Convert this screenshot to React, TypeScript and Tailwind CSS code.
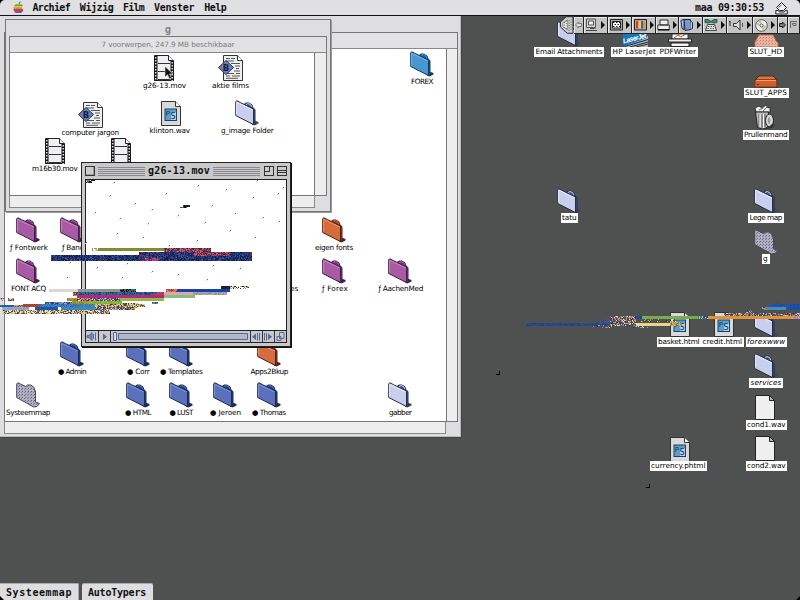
import React, { useLayoutEffect, useRef, useState } from "react";

/* Text whose tracking is adjusted until it spans the given width. */
function Fit({ text, w, className = "" }: { text: string; w: number; className?: string }) {
  const ref = useRef<HTMLSpanElement>(null);
  const [ls, setLs] = useState(0);
  useLayoutEffect(() => {
    if (ref.current) {
      const natural = ref.current.getBoundingClientRect().width;
      setLs((w - natural) / text.length);
    }
  }, [text, w]);
  return (
    <span ref={ref} className={"inline-block whitespace-pre " + className} style={{ letterSpacing: ls }}>
      {text}
    </span>
  );
}

const chicago = "font-['DejaVu_Sans_Mono',monospace] font-bold text-[10px] leading-[12px] text-[#111]";

type Tone = { face: string; hi: string; side: string; edge: string };
const tones: Record<string, Tone> = {
  purple: { face: "#a85aa4", hi: "#c488c0", side: "#6d3a86", edge: "#3d2142" },
  blue: { face: "#5a70bb", hi: "#7f94d2", side: "#1f4589", edge: "#1a2a50" },
  sky: { face: "#4596d2", hi: "#74b4e4", side: "#1d5c9f", edge: "#173a63" },
  orange: { face: "#d66c3c", hi: "#e89468", side: "#9c3c26", edge: "#4f2014" },
  pale: { face: "#c8cfec", hi: "#e8ecfa", side: "#425795", edge: "#252c46" },
};

function Folder({ tone }: { tone: string }) {
  const t = tones[tone];
  return (
    <svg width="25" height="27" viewBox="0 0 25 27">
      <path d="M18 20l5.500 2v1.500l-4 2-5-3z" fill={tone === "pale" ? "#444850" : t.edge} />
      <path d="M9 4.500l2-1.500h3l3 2 1 3 2 1.500v14.500l-2 .8z" fill={t.side} stroke={t.edge} strokeWidth="1" />
      <path d="M11 4.500l2-1 2.500 1 1.500 2.500" fill="none" stroke={t.face} strokeWidth="1" />
      <path d="M.7 2l1-1.300 4 2L18.500 9v15.600L.7 15.500z" fill={t.face} stroke={t.edge} strokeWidth="1" />
      <path d="M1.600 14.500V2.400L17.600 10" fill="none" stroke={t.hi} strokeWidth="1" />
    </svg>
  );
}

function OpenFolder() {
  return (
    <svg width="25" height="27" viewBox="0 0 25 27">
      <defs>
        <pattern id="dots" width="3" height="3" patternUnits="userSpaceOnUse">
          <rect width="3" height="3" fill="#b0b0c4" />
          <rect width="1" height="1" fill="#606078" />
          <rect x="2" y="1" width="1" height="1" fill="#7a7a90" />
        </pattern>
      </defs>
      <path d="M.7 2l1-1.300 8 3.800 2-1.500h3l3 2 1 3 .8 1V20l4 1.500-2.500 3-3.500.5L.7 15.500z" fill="url(#dots)" stroke="#484858" strokeWidth="1" />
    </svg>
  );
}

function Film() {
  return (
    <svg width="21" height="26" viewBox="0 0 21 26">
      <path d="M.5.5h14l5 5v20H.5z" fill="#f0f0f2" stroke="#222" />
      <path d="M14.500.5v5h5" fill="#fff" stroke="#222" />
      <path d="M2 1v25M18 6v20" stroke="#111" strokeWidth="3" />
      <path d="M1.800 2v24M18.200 7v19" stroke="#f4f4f4" strokeWidth="1.400" strokeDasharray="1.500 1.500" />
      <path d="M4 8.500h12M4 16.500h12M4 24.500h12" stroke="#333" />
    </svg>
  );
}

function BBDoc() {
  return (
    <svg width="26" height="26" viewBox="0 0 26 26">
      <path d="M5.500.5h14l5 5v20h-19z" fill="#efefef" stroke="#333" />
      <path d="M19.500.5v5h5" fill="#fff" stroke="#333" />
      <path d="M8 3.500h4M13 3.500h4M8 6h8M13 8.500h9M17 11h5M18 13.500h3M16 16h6M9 18.500h7M18 18.500h4M8 21h4M14 21h8M8 23.300h12" stroke="#555" />
      <path d="M8 5.500L15.500 12.500 8 19.500.5 12.500z" fill="#6880b4" stroke="#26345c" />
      <text x="4.800" y="15.700" fontFamily="DejaVu Sans, sans-serif" fontWeight="bold" fontSize="8.500" fill="#16203c">B</text>
    </svg>
  );
}

function PsDoc() {
  return (
    <svg width="20" height="25" viewBox="0 0 20 25">
      <path d="M.5.5h14l5 5v19H.5z" fill="#d9d9d9" stroke="#333" />
      <path d="M14.500.5v5h5" fill="#fff" stroke="#333" />
      <rect x="4" y="8" width="11.500" height="11.500" fill="#55a0cc" stroke="#23415c" />
      <path d="M10 13l5-2v8h-5z" fill="#a8d0f4" />
      <text x="4.800" y="14.800" fontFamily="DejaVu Sans, sans-serif" fontSize="7" fill="#193250">P</text>
      <text x="9.500" y="18" fontFamily="DejaVu Sans, sans-serif" fontSize="8" fill="#193250">S</text>
    </svg>
  );
}

function BlankDoc() {
  return (
    <svg width="20" height="25" viewBox="0 0 20 25">
      <path d="M.5.5h14l5 5v19H.5z" fill="#efefef" stroke="#222" />
      <path d="M14.500.5v5h5z" fill="#bbb" stroke="#222" />
    </svg>
  );
}

function Drive() {
  return (
    <svg width="25" height="14" viewBox="0 0 25 14">
      <path d="M3 11h20l1 2H5z" fill="#333" />
      <path d="M1 5l4-4h14l4 4z" fill="#dd7741" stroke="#5a2412" />
      <path d="M.8 5h22v7h-22z" fill="#d25f2b" stroke="#7c3418" />
      <path d="M2 5.500h20" stroke="#f0a070" />
      <path d="M3 9.500h2" stroke="#6a2a14" />
    </svg>
  );
}

function OpenDrive() {
  return (
    <svg width="26" height="14" viewBox="0 0 26 14">
      <defs>
        <pattern id="odots" width="3" height="3" patternUnits="userSpaceOnUse">
          <rect width="3" height="3" fill="#ebb4a2" />
          <rect width="1" height="1" fill="#c8795f" />
          <rect x="2" y="1" width="1" height="1" fill="#db9079" />
        </pattern>
      </defs>
      <path d="M1 13V8l4-7h14l3 6 2 2v4z" fill="url(#odots)" stroke="#c4694c" strokeWidth=".8" />
    </svg>
  );
}

function Trash() {
  return (
    <svg width="22" height="25" viewBox="0 0 22 25">
      <path d="M2 7L1 3l4-2 3 2 4-3 2 3 2-1v5z" fill="#eee" stroke="#222" strokeWidth=".8" />
      <path d="M5 5l4-2M9 6l4-4" stroke="#666" />
      <path d="M1.500 7h13l-1 15.500-5 1.500-5-1.500z" fill="#bdbdbd" stroke="#222" />
      <path d="M5 9v13M8 9v14M11 9v13" stroke="#555" />
      <path d="M6 9v13M9.500 9v14" stroke="#fff" />
      <ellipse cx="15.500" cy="15.500" rx="4" ry="6.500" fill="#ccc" stroke="#222" />
      <ellipse cx="15" cy="15.500" rx="2" ry="4" fill="#999" stroke="#eee" />
      <path d="M18 19l3 1-3 3-6 1z" fill="#333" />
    </svg>
  );
}

function Laser() {
  return (
    <svg width="28" height="14" viewBox="0 0 28 14" className="overflow-visible">
      <path d="M1 9L26 2v11H4z" fill="#aeb9c4" />
      <path d="M1 0h24v4L3 12 .5 10z" fill="#1974b4" />
      <path d="M3 12.500l23-7M8 13l18-5M14 13l12-3" stroke="#1c2228" />
      <text x="1.500" y="9.500" transform="rotate(-14 1.500 9.500)" fontFamily="Liberation Sans, sans-serif" fontWeight="bold" fontStyle="italic" fontSize="7" textLength="24" fill="#fff">LaserJet</text>
    </svg>
  );
}

function PdfPrinter() {
  return (
    <svg width="24" height="13" viewBox="0 0 24 13">
      <path d="M4 0h16v5H4z" fill="#fff" stroke="#333" />
      <path d="M6 4l4-3 3 2 5-3" fill="none" stroke="#d0402c" />
      <path d="M.5 5h23v3H.5z" fill="#eee" stroke="#222" />
      <path d="M3 9h18v3.500H3z" fill="#f4f4f4" stroke="#222" />
    </svg>
  );
}

function glyph(kind: string) {
  switch (kind) {
    case "open": return <OpenFolder />;
    case "film": return <Film />;
    case "bb": return <BBDoc />;
    case "ps": return <PsDoc />;
    case "blank": return <BlankDoc />;
    case "drive": return <Drive />;
    case "opendrive": return <OpenDrive />;
    case "trash": return <Trash />;
    case "laser": return <Laser />;
    case "pdf": return <PdfPrinter />;
    default: return <Folder tone={kind} />;
  }
}

/* kind, icon x, icon y, label, label left, label right, label middle */
type Item = [string, number, number, string, number, number, number];

const backItems: Item[] = [
  ["sky", 410, 51, "FOREX", 411, 433, 82],
  ["purple", 16, 217, "ƒ Fontwerk", 10, 48, 247.5],
  ["purple", 60, 217, "ƒ Bang", 62, 84, 247.5],
  ["purple", 16, 258, "FONT ACQ", 11, 46, 289],
  ["orange", 322, 217, "eigen fonts", 315, 353, 247.5],
  ["purple", 322, 258, "ƒ Forex", 322, 348, 289],
  ["purple", 262, 258, "es", 290, 298.5, 289],
  ["purple", 388, 258, "ƒ AachenMed", 378.5, 423, 289],
  ["blue", 60, 341, "● Admin", 58, 86, 372],
  ["blue", 126, 341, "● Corr", 127, 149.5, 372],
  ["blue", 169, 341, "● Templates", 160, 202.5, 372],
  ["orange", 257, 341, "Apps2Bkup", 250.5, 288, 372],
  ["open", 16, 382, "Systeemmap", 6, 50, 413],
  ["blue", 126, 382, "● HTML", 125, 151, 413],
  ["blue", 169, 382, "● LUST", 169.5, 193, 413],
  ["blue", 213, 382, "● Jeroen", 210, 241, 413],
  ["blue", 257, 382, "● Thomas", 252, 285.5, 413],
  ["pale", 388, 382, "gabber", 389, 411.5, 413],
];

const frontItems: Item[] = [
  ["film", 154, 55, "g26-13.mov", 143, 186, 86],
  ["bb", 218, 55, "aktie films", 212, 249, 86],
  ["bb", 78, 102, "computer jargon", 61.5, 119, 132.5],
  ["ps", 161, 101, "klinton.wav", 149.5, 190, 131],
  ["pale", 235, 100, "g_image Folder", 221, 273.5, 130.5],
  ["film", 45, 138, "m16b30.mov", 32, 77.5, 168.5],
  ["film", 111, 138, "", 0, 0, 0],
];

const deskItems: Item[] = [
  ["pale", 557, 21, "Email Attachments", 535.5, 602.5, 52],
  ["laser", 622, 34, "HP LaserJet", 612.5, 656, 52],
  ["pdf", 668, 34, "PDFWriter", 659.5, 696, 52],
  ["opendrive", 754, 34, "SLUT_HD", 749.5, 782, 52],
  ["drive", 754, 75, "SLUT_APPS", 745, 787, 93],
  ["trash", 754, 105, "Prullenmand", 744, 787.5, 134.5],
  ["pale", 557, 188, "tatu", 562, 576.5, 217.5],
  ["pale", 754, 188, "Lege map", 749.5, 782, 217.5],
  ["open", 754, 229, "g", 763, 768, 259],
  ["ps", 669.5, 312, "basket.html", 658, 699.5, 341.7],
  ["ps", 713.5, 312, "credit.html", 702.5, 742, 341.7],
  ["pale", 754, 312, "forexwww", 747, 785.5, 341.7],
  ["pale", 754, 353, "services", 750.5, 781.5, 383.3],
  ["blank", 754.5, 394.5, "cond1.wav", 747, 785.5, 424.7],
  ["blank", 754.5, 436, "cond2.wav", 747, 785.5, 466],
  ["ps", 669.5, 436.5, "currency.phtml", 651, 705.5, 466],
];

function Icons({ items, boxed = false }: { items: Item[]; boxed?: boolean }) {
  return (
    <>
      {items.map(([kind, x, y, label, l, r, cy], i) => (
        <React.Fragment key={i}>
          <div className="absolute" style={{ left: x, top: y }}>{glyph(kind)}</div>
          {label && (
            <div
              className={"absolute flex h-[10px] items-center justify-start " + (boxed ? "bg-white px-[1.5px]" : "")}
              style={{ left: boxed ? l - 1.5 : l, top: cy - 5, width: boxed ? r - l + 3 : r - l }}
            >
              <Fit
                text={label}
                w={r - l}
                className={
                  "font-['DejaVu_Sans',sans-serif] text-[7.3px] leading-[10px] text-black " +
                  (label === "forexwww" || label === "services" ? "italic" : "")
                }
              />
            </div>
          )}
        </React.Fragment>
      ))}
    </>
  );
}

/* Coloured pixel debris: x1, x2, y1, y2, palette, density */
type Strip = [number, number, number, number, string[], number?];
const multi = ["#d8a040", "#2b5ca8", "#7a3a30", "#e8e0c0", "#50603c", "#c06890", "#303030", "#88a8d0"];
const navy = ["#152c6c", "#1c3f94", "#151a38", "#26347c", "#4a2a5c", "#0f2148", "#2c60a8"];
const navyRed = ["#152c6c", "#1c3f94", "#151a38", "#8e2848", "#26347c", "#2c60a8", "#1a2c70"];
const redBlue = ["#c84444", "#703468", "#2c4488", "#e06050", "#3d2444"];
const yellowMix = ["#e8d040", "#2b5ca8", "#e0d8a8", "#b04834", "#304068", "#c8b030", "#a0a8b8"];
const teal = ["#1a5878", "#207898", "#1c3c58", "#3c6c80"];

const strips: Strip[] = [
  [92, 98, 248, 251, ["#8b9a3c", "#fff", "#bcd0e8"]],
  [98, 164, 248, 251, ["#838c2c"]],
  [164, 211, 248, 252, redBlue],
  [139, 252, 252, 256, navyRed],
  [51, 139, 255, 261, navy],
  [139, 160, 255, 261, navyRed],
  [160, 252, 255, 261, navy],
  [145, 158, 258, 261, ["#a83870", "#503070", "#d04468"]],
  [194, 230, 252, 256, redBlue],
  [49, 78, 289, 292, ["#d7d7d9"]],
  [78, 120, 289, 292, ["#929494"]],
  [120, 136, 289, 292, ["#181818", "#287080", "#405858"]],
  [166, 177, 289, 292, ["#d85c3c", "#e09060", "#903c58"]],
  [177, 230, 289, 292, ["#1744a0"]],
  [221, 230, 286, 289, ["#181c30", "#202850"]],
  [230, 249, 286, 289, ["#222", "#c8b850", "#fff", "#808890"], 0.8],
  [73, 77, 292, 296, ["#d88444", "#804038"]],
  [77, 155, 292, 295, teal],
  [155, 164, 292, 295, ["#c84848", "#704078"]],
  [164, 193, 292, 295, ["#dda5ba"]],
  [193, 227, 292, 295, ["#cc9c78", "#b8a0a0", "#7098d0"]],
  [77, 164, 295, 298, ["#bc228a"]],
  [164, 195, 295, 298, ["#84c178"]],
  [67, 77, 298, 301, ["#a89830", "#8c8024"]],
  [77, 120, 298, 301, multi],
  [120, 164, 298, 301, ["#91bd3e"]],
  [45, 72, 302, 305, ["#2b5ca8", "#6b8cc0", "#384060", "#9caccc"]],
  [72, 88, 301, 304, ["#a69c3c", "#7c8c38"]],
  [88, 122, 301, 304, ["#7cac38", "#91bd3e"]],
  [122, 138, 303, 308, yellowMix],
  [152, 158, 302, 304, ["#2c3c90", "#6880a8"]],
  [0, 14, 305, 307, ["#2368b4", "#1d559c"]],
  [14, 23, 305, 307, ["#c0a850", "#405078"]],
  [23, 40, 304, 307, ["#a04c30"]],
  [40, 75, 304, 307, ["#2868b4", "#5080bc"]],
  [75, 95, 304, 307, ["#4888c0", "#288090"]],
  [95, 145, 304, 307, yellowMix],
  [2, 29, 307, 310, ["#8d9dca", "#a1a6c2"]],
  [35, 58, 307, 310, ["#1756b2"]],
  [61, 95, 307, 310, ["#4685c1", "#4f7da8"]],
  [95, 135, 307, 310, multi],
  [2, 110, 310, 314, yellowMix, 0.88],
  [0, 4, 298, 301, multi, 0.8],
  [8, 14, 298, 301, multi],
  [526, 610, 323, 326, ["#20408e", "#254996", "#354a70"], 0.95],
  [610, 636, 316, 326, multi, 0.8],
  [592, 612, 325, 329, multi, 0.45],
  [600, 612, 319, 324, ["#284890", "#485880"], 0.6],
  [632, 652, 325, 328, multi, 0.5],
  [635, 642, 316, 319, ["#254f9e", "#173b82"]],
  [642, 698, 316, 319, ["#77ae4b"]],
  [640, 676, 319, 322, multi, 0.35],
  [698, 708, 316, 319, ["#287888", "#c8ccb8", "#344c60"]],
  [708, 792, 316, 319, ["#e39235"]],
  [792, 800, 316, 319, ["#c8a0a8", "#a8889c"]],
  [636, 670, 323, 326, ["#efd37f"]],
  [670, 682, 322, 326, ["#d6ae42", "#48738a", "#b19550"]],
  [724, 800, 313, 316, multi, 0.82],
  [746, 752, 310, 313, multi, 0.7],
  [770, 800, 304, 307, ["#2359aa", "#1e4998"]],
  [776, 780, 301, 304, ["#ad9338", "#504c34"], 0.7],
  [762, 765, 307, 310, ["#e08a30", "#444"]],
  [765, 786, 307, 310, ["#4b88c3"]],
  [788, 800, 307, 310, ["#1850a5"]],
  [86, 92, 180, 183, ["#111", "#243c28", "#777"], 0.85],
  [92, 95, 180, 181, ["#111"]],
  [183, 190, 205, 207, ["#111", "#294a34"]],
  [180, 187, 207, 208, ["#111", "#496454"]],
];

const specks = [
  342, 65, 595, 75, 770, 60, 850, 80, 330, 105, 405, 130, 498, 100, 678, 87, 760, 110, 835, 100, 285, 155, 455, 148,
  635, 135, 705, 158, 790, 172, 360, 175, 445, 190, 535, 165, 615, 185, 690, 210, 350, 220, 430, 232, 508, 255, 590,
  240, 765, 230, 210, 305, 292, 322, 380, 310, 455, 332, 640, 315, 720, 325, 200, 350, 365, 350, 535, 343, 620, 358,
  257, 247, 838, 182,
];

function Debris() {
  let seed = 77;
  const rnd = () => {
    seed = (seed * 1664525 + 1013904223) % 4294967296;
    return seed / 4294967296;
  };
  const out: React.ReactNode[] = [];
  strips.forEach(([x1, x2, y1, y2, pal, density = 1], s) => {
    if (pal.length === 1 && density === 1) {
      out.push(<rect key={"s" + s} x={x1} y={y1} width={x2 - x1} height={y2 - y1} fill={pal[0]} />);
      return;
    }
    for (let y = y1; y < y2; y++)
      for (let x = x1; x < x2; x++)
        if (rnd() < density)
          out.push(<rect key={s + "-" + x + "-" + y} x={x} y={y} width="1" height="1" fill={pal[Math.floor(rnd() * pal.length)]} />);
  });
  for (let i = 0; i < specks.length; i += 2) {
    const x = Math.round(specks[i] / 3);
    const y = 160 + Math.round(specks[i + 1] / 3);
    out.push(<rect key={"k" + i} x={x} y={y} width="1" height="1" fill="#666" />);
    out.push(<rect key={"j" + i} x={x - 1} y={y + 1} width="1" height="1" fill="#ccc" />);
  }
  return (
    <svg className="pointer-events-none absolute top-0 left-0" width="800" height="600" shapeRendering="crispEdges">
      {out}
    </svg>
  );
}

function BackWindow() {
  return (
    <div className="absolute top-4 left-0 h-[421px] w-[461px] border-r border-b border-[#bbb] bg-[#dedee0] shadow-[1px_1px_0_#444]">
      <div className="relative mt-4 ml-1 h-[390px] w-[454px] border border-[#777] bg-[#e2e2e4]">
        <div className="mt-[15px] flex h-[373px] border-t border-[#888]">
          <div className="w-[441px] bg-white" />
          <div className="w-[11px] border-l border-[#777] bg-[#eeeeef]" />
        </div>
      </div>
      <div className="ml-1 h-[12px] w-[442px] border-r border-b border-l border-[#888] bg-[#eeeeef]" />
    </div>
  );
}

function FrontWindow() {
  return (
    <div className="absolute top-[19px] left-[5px] h-[193px] w-[326px] border border-[#777] bg-[#dedee0] shadow-[1px_1px_0_#999]">
      <div className="flex h-[16px] items-center justify-center pt-px font-['DejaVu_Sans_Mono',monospace] text-[10.5px] leading-[12px] font-bold text-[#858585]">
        g
      </div>
      <div className="ml-[3px] h-[160px] w-[318px] border border-[#777]">
        <div className="flex h-[16px] items-center justify-center border-b border-[#888] bg-[#e2e2e4] text-[#7c7c7c]">
          <Fit text="7 voorwerpen, 247.9 MB beschikbaar" w={133} className="font-['DejaVu_Sans',sans-serif] text-[7.3px] leading-[10px]" />
        </div>
        <div className="flex h-[142px]">
          <div className="w-[304px] bg-white" />
          <div className="w-[12px] border-l border-[#777] bg-[#eeeeef]" />
        </div>
      </div>
      <div className="ml-[3px] h-[12px] w-[306px] border-r border-b border-l border-[#888] bg-[#eeeeef]" />
    </div>
  );
}

const Lines = () => (
  <div className="flex h-[9px] flex-1 flex-col justify-between">
    {[0, 1, 2, 3, 4].map((i) => (
      <div key={i} className="h-px bg-[#8b8b8b]" />
    ))}
  </div>
);

function MovieWindow() {
  return (
    <div className="absolute top-[162px] left-[81px] flex h-[185px] w-[210px] flex-col border border-[#222] bg-[#c9c9cb] px-[3px] pb-[3px] shadow-[1px_1px_0_#111]">
      <div className="flex h-[16px] items-center">
        <div className="h-[10px] w-[10px] border border-[#333] bg-[#ccc] shadow-[inset_-1px_-1px_0_#999]" />
        <div className="ml-[3px] flex flex-1 items-center gap-[3px]">
          <Lines />
          <Fit text="g26-13.mov" w={62} className={chicago} />
          <Lines />
        </div>
        <div className="ml-[4px] h-[10px] w-[10px] border border-[#333] bg-[#ccc]">
          <div className="h-[5px] w-[5px] border-r border-b border-[#333]" />
        </div>
        <div className="ml-[3px] flex h-[10px] w-[10px] flex-col justify-center gap-px border border-[#333] bg-[#ccc]">
          <div className="h-px bg-[#333]" />
          <div className="h-px bg-[#333]" />
        </div>
      </div>
      <div className="flex flex-1 flex-col border border-[#222] bg-white">
        <div className="flex-1" />
        <div className="flex h-[12px] border-t border-[#222] bg-[#c9c9cb]">
          <svg width="200" height="12" viewBox="0 0 200 12" fill="none" stroke="#5068a0">
            <path d="M1 4.500h2l3-3v8l-3-3H1z" fill="#7186b5" />
            <path d="M7.500 3v5M9.500 1.500v8" />
            <path d="M17 2.500l4 3.300-4 3.300z" fill="#5068a0" stroke="none" />
            <path d="M12.500 0v12M24.500 0v12M164.500 0v12M176.500 0v12M188.500 0v12" stroke="#333" />
            <path d="M32.500 2.500h129v6h-129z" fill="#b4b8c2" />
            <path d="M27.500 1.500h3v8h-3z" fill="#d9dce8" />
            <path d="M170 2.500l-4 3.300 4 3.300zM182 2.500l4 3.300-4 3.300z" fill="#5068a0" stroke="none" />
            <path d="M171.500 2v7.500M173.500 2v7.500M178.500 2v7.500M180.500 2v7.500" />
            <path d="M193.500 1.500h4.500v6h-4.500zM191 5.500h4v4h-4z" />
          </svg>
        </div>
      </div>
    </div>
  );
}

function Cell({ w, children }: { w: number; children: React.ReactNode }) {
  return (
    <div className="flex h-[18px] shrink-0 items-center justify-center border-y border-r border-[#222] bg-[#c4c4c5] shadow-[inset_1px_1px_0_#e8e8e8]" style={{ width: w }}>
      {children}
    </div>
  );
}

const Play = () => (
  <svg width="4" height="8" viewBox="0 0 4 8" className="ml-[3px] shrink-0">
    <path d="M0 0l4 4-4 4z" fill="#111" />
  </svg>
);

function ControlStrip() {
  return (
    <div className="absolute top-4 left-[557px] flex h-[18px] w-[243px] overflow-hidden">
      <svg width="17" height="18" viewBox="0 0 17 18">
        <path d="M16.500.5H9.500L3.500 6v5l7 6.500h6z" fill="#cfcfd0" stroke="#222" />
        <path d="M11 3.500L6 7v3.500l5 3.500z" fill="#f0f0f0" stroke="#777" strokeWidth=".8" />
        <path d="M7.500 6v6M9.500 4.500v9M12.500 4v11M14.500 3v12" stroke="#555" strokeDasharray="1 1.500" />
      </svg>
      <Cell w={10}>
        <svg width="7" height="8" viewBox="0 0 7 8"><path d="M.5 4L3.500 1v1.500h3v3h-3V7z" fill="#ddd" stroke="#777" /></svg>
      </Cell>
      <Cell w={24.5}>
        <svg width="13" height="14" viewBox="0 0 13 14"><path d="M1.500 1h9v8.500h-9z" fill="#d4d4d6" stroke="#555" /><path d="M3.500 3h5v4h-5z" fill="#eef" stroke="#555" /><path d="M5 10.500h4M1 12.500h11" stroke="#444" /><path d="M9 10.500h2" stroke="#7080c0" /></svg>
        <Play />
      </Cell>
      <Cell w={24}>
        <svg width="13" height="12" viewBox="0 0 13 12"><path d="M.5.5h12v10.500H.5z" fill="#aaa" stroke="#222" /><path d="M2.500 2.500h8v6.500h-8z" fill="#fff" stroke="#222" /><path d="M3 3.500h7M3 7.500h7" stroke="#222" strokeDasharray="1.500 1.500" /><path d="M4.500 5.500h6" stroke="#222" strokeDasharray="1.500 1.500" /></svg>
        <Play />
      </Cell>
      <Cell w={24}>
        <svg width="13" height="12" viewBox="0 0 13 12"><path d="M.5.5h12v10.500H.5z" fill="#aaa" stroke="#222" /><path d="M2 2h2.500v7.500H2z" fill="#d84030" /><path d="M4.500 2H7v7.500H4.500z" fill="#ecd040" /><path d="M7 2h2v7.500H7z" fill="#3464b0" /><path d="M9 2h2v7.500H9z" fill="#e09040" /></svg>
        <Play />
      </Cell>
      <Cell w={22.5}>
        <svg width="13" height="12" viewBox="0 0 13 12"><path d="M3 1h8v5H3zM.8 6h11.500v4.500H.8z" fill="#eee" stroke="#333" /><path d="M1 10.800h11.500" stroke="#111" strokeWidth="1.500" /></svg>
        <Play />
      </Cell>
      <Cell w={24.5}>
        <svg width="14" height="14" viewBox="0 0 14 14"><path d="M4 1.500h6.500v10L5 12.500z" fill="#7d96c8" stroke="#1c2c50" /><path d="M1 2.500l3-1v10l-2-1zM10.500 3l2 1.500v6l-2 1" fill="#c0ccdf" stroke="#1c2c50" /></svg>
        <Play />
      </Cell>
      <Cell w={23.5}>
        <svg width="14" height="14" viewBox="0 0 14 14"><path d="M1 1.500h3l3 2 3-2h3v3l-3 .5-3-1-3 1-3-.5z" fill="#3d8e68" stroke="#244" strokeWidth=".8" /><path d="M1.500 12.500l2-6h7l2 6z" fill="#e4e4e4" stroke="#444" /><path d="M4 8.500h6M3.500 10.500h7" stroke="#555" strokeDasharray="1.500 1" /></svg>
        <Play />
      </Cell>
      <Cell w={26.5}>
        <svg width="16" height="12" viewBox="0 0 16 12"><path d="M1 3l1-1v5" fill="none" stroke="#222" /><path d="M5.500 4.500h3L12 1v10L8.500 7.500h-3z" fill="#ddd" stroke="#333" /><path d="M14.500 4v4" stroke="#555" /></svg>
        <Play />
      </Cell>
      <Cell w={24.5}>
        <svg width="13" height="13" viewBox="0 0 13 13"><circle cx="6.500" cy="6.500" r="5.800" fill="#eee" stroke="#555" /><path d="M6.500 6.500L3 2l3-1zM6.500 6.500l4 4-3 1z" fill="#c0c868" /><path d="M6.500 6.500L1.500 6l1-3zM6.500 6.500l5 0-1 3z" fill="#b8c0e0" /><circle cx="6.500" cy="6.500" r="1.500" fill="#fff" stroke="#555" /></svg>
        <Play />
      </Cell>
      <Cell w={10.5}>
        <svg width="7" height="8" viewBox="0 0 7 8"><path d="M6.500 4L3.500 1v1.500h-3v3h3V7z" fill="#777" stroke="#222" /></svg>
      </Cell>
      <Cell w={12}>
        <svg width="7" height="8" viewBox="0 0 7 8"><path d="M.5 7V.5H7M2.500 2.500H6v2H3z" fill="none" stroke="#666" /></svg>
      </Cell>
    </div>
  );
}

const menus: [string, number][] = [["Archief", 37.5], ["Wijzig", 33.5], ["Film", 21], ["Venster", 40.5], ["Help", 22]];

function MenuBar() {
  return (
    <div className="absolute inset-x-0 top-0 h-4 border-b border-[#111] bg-black">
      <div className="flex h-[15px] items-center rounded-t-[5px] bg-[#e0e0e2] pr-[12px] pl-[13px]">
        <svg width="11" height="13" viewBox="0 0 11 13">
          <defs>
            <clipPath id="apple">
              <path d="M5.500 3.500C3 2.500.5 4 .5 7.500S3 12.500 4 12c1-.5 2-.5 3 0s2.500-1 3.500-3C8.500 8 8.500 5.500 10 4.500 9 3 7 3 5.500 3.500z" />
            </clipPath>
          </defs>
          <path d="M5.500 3c0-1.500 1-2.500 2.200-2.800C7.800 1.800 7 3 5.500 3z" fill="#46a040" />
          <g clipPath="url(#apple)">
            <path d="M0 2h11v3H0z" fill="#68ac3c" />
            <path d="M0 5h11v2H0z" fill="#ecc438" />
            <path d="M0 6.500h11v2H0z" fill="#e8823c" />
            <path d="M0 8h11v2H0z" fill="#d0404c" />
            <path d="M0 9.500h11v2H0z" fill="#894a9a" />
            <path d="M0 11h11v2H0z" fill="#3e60ac" />
          </g>
        </svg>
        <div className="ml-[8.5px] flex gap-[9.8px]">
          {menus.map(([m, w]) => (
            <Fit key={m} text={m} w={w} className={chicago} />
          ))}
        </div>
        <div className="ml-auto flex items-center gap-[11px]">
          <Fit text="maa 09:30:53" w={69} className={chicago} />
          <svg width="13" height="14" viewBox="0 0 13 14">
            <path d="M6.500 1.500l5 5-3 3h-4l-3-3z" fill="#eee" stroke="#222" />
            <path d="M.8 9.500h2.500l1 1.500h5l1-1.500h2v3.500H.8z" fill="#eee" stroke="#222" />
            <path d="M3.500 6.500l3-2.500" stroke="#555" />
          </svg>
        </div>
      </div>
    </div>
  );
}

export default function App() {
  return (
    <div className="relative h-[600px] w-[800px] overflow-hidden bg-[#4f5151]">
      <Icons items={deskItems} boxed />
      <BackWindow />
      <Icons items={backItems} />
      <FrontWindow />
      <Icons items={frontItems} />
      <svg className="absolute top-[66px] left-[164px]" width="10" height="14" viewBox="0 0 10 14">
        <path d="M1 .5v10.500l2.500-2.300 2 4.300 2-1-2-4H9z" fill="#111" stroke="#ddd" strokeWidth=".6" />
      </svg>
      <MovieWindow />
      <Debris />
      <MenuBar />
      <ControlStrip />
      <div className="absolute top-[371px] left-[496px] h-[4px] w-[4px] border-r border-b border-black" />
      <div className="absolute top-[484px] left-[646px] h-[4px] w-[4px] border-r border-b border-black" />
      <div className="absolute bottom-0 left-0 flex h-[17px] gap-[3px]">
        <div className="flex w-[79px] items-center rounded-tr-[2px] border-t border-r border-[#aaa] bg-[#dedee0] pt-px pl-[6px]">
          <Fit text="Systeemmap" w={66} className={chicago} />
        </div>
        <div className="flex w-[71px] items-center rounded-t-[2px] border-t border-[#aaa] bg-[#dedee0] pt-px pl-[6px]">
          <Fit text="AutoTypers" w={58} className={chicago} />
        </div>
      </div>
      <svg className="absolute bottom-0 left-0" width="4" height="4" viewBox="0 0 4 4">
        <path d="M0 0l4 4H0z" fill="#000" />
      </svg>
      <svg className="absolute right-0 bottom-0" width="4" height="4" viewBox="0 0 4 4">
        <path d="M4 0v4H0z" fill="#000" />
      </svg>
    </div>
  );
}
